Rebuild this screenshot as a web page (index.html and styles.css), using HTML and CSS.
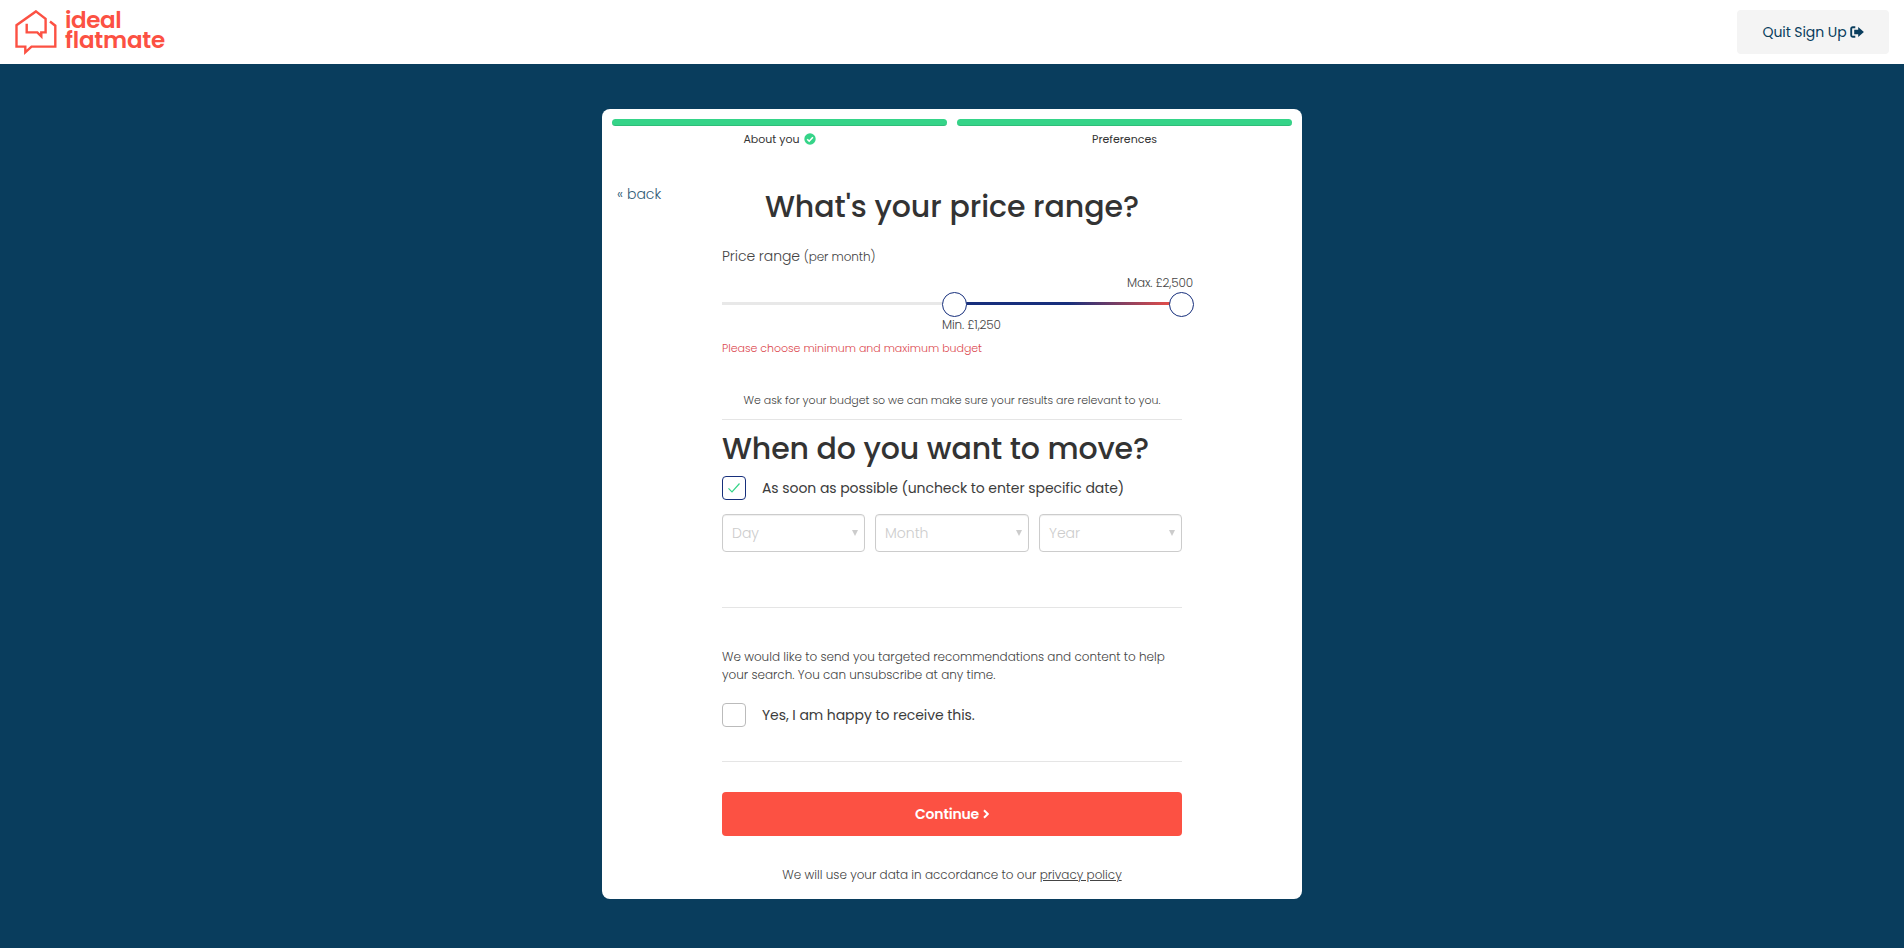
FILE: index.html
```html
<!DOCTYPE html>
<html lang="en">
<head>
<meta charset="utf-8">
<title>Ideal Flatmate - Sign Up</title>
<link rel="stylesheet" href="styles.css">
</head>
<body>
<header class="header">
  <a class="logo">
    <svg class="logo-mark" width="43" height="46" viewBox="0 0 43 46" fill="none" stroke="#fc5143" stroke-width="2.4"><path d="M36 11.500l5.300 4.200v20.900H17.500l-6.200 5.700v-5.700H2.500V15.200L21.900 1.400L31.600 8.800v13.600h-4.300v4l-4-4H12.700v-8.600"/></svg>
    <span class="logo-text"><span class="t-ideal">ideal</span><span class="t-flat">flatmate</span></span>
  </a>
  <a class="quit"><span class="t-quit">Quit Sign Up</span><svg width="14" height="12" viewBox="0 0 14 12"><path d="M5.300 1.200H2.700A1.500 1.500 0 0 0 1.200 2.700v6.600A1.500 1.500 0 0 0 2.700 10.800h2.600" fill="none" stroke="#093d5d" stroke-width="1.900"/><path d="M4.200 3.800v4.400h4v2.900L13.900 6 8.200.9v2.900z" fill="#093d5d"/></svg></a>
</header>
<main class="card">
  <div class="steps">
    <div class="step"><div class="bar"></div><div class="step-label"><span>About you</span><svg width="12" height="12" viewBox="0 0 12 12"><circle cx="6" cy="6" r="5.700" fill="#35d488"/><path d="M3.200 6.200l2 2 3.700-3.900" fill="none" stroke="#fff" stroke-width="1.600"/></svg></div></div>
    <div class="step"><div class="bar"></div><div class="step-label"><span>Preferences</span></div></div>
  </div>
  <div class="content">
    <a class="back">« back</a>
    <form class="form">
      <h1 class="title">What's your price range?</h1>
      <div class="price-label"><span class="t-price">Price range</span> <span class="t-per">(per month)</span></div>
      <div class="slider">
        <div class="track"><div class="fill"></div></div>
        <span class="handle handle-min"></span><span class="handle handle-max"></span>
        <span class="val val-max">Max. £2,500</span>
        <span class="val val-min">Min. £1,250</span>
      </div>
      <div class="error">Please choose minimum and maximum budget</div>
      <div class="hint">We ask for your budget so we can make sure your results are relevant to you.</div>
      <hr class="rule">
      <h2 class="subtitle">When do you want to move?</h2>
      <label class="check"><span class="box box-on"><svg width="14" height="12" viewBox="0 0 14 12"><path d="M1.500 6.300l3.500 3.500L12.500 1.500" fill="none" stroke="#35d488" stroke-width="1.200"/></svg></span><span>As soon as possible (uncheck to enter specific date)</span></label>
      <div class="selects">
        <div class="select"><span>Day</span><i class="arrow"></i></div>
        <div class="select"><span>Month</span><i class="arrow"></i></div>
        <div class="select"><span>Year</span><i class="arrow"></i></div>
      </div>
      <hr class="rule rule-2">
      <p class="promo">We would like to send you targeted recommendations and content to help<br>your search. You can unsubscribe at any time.</p>
      <label class="check check-2"><span class="box"></span><span>Yes, I am happy to receive this.</span></label>
      <hr class="rule rule-3">
      <a class="continue"><span class="t-cont">Continue</span><svg width="6" height="10" viewBox="0 0 6 10"><path d="M1 1.200L4.800 5 1 8.800" fill="none" stroke="#fff" stroke-width="2"/></svg></a>
      <div class="note">We will use your data in accordance to our <a class="policy">privacy policy</a></div>
    </form>
  </div>
</main>
</body>
</html>
```
FILE: styles.css
```css
* { box-sizing: border-box; }
body { margin: 0; min-height: 948px; background: #093d5d; color: #333; font-family: Poppins, Inter, sans-serif; font-size: 14px; font-weight: 300; }
.header { height: 64px; background: #fff; display: flex; justify-content: space-between; align-items: flex-start; padding: 10px 15px 0 14px; }
.logo { display: flex; gap: 8px; }
.logo-text { display: flex; flex-direction: column; font-size: 23px; line-height: 20px; font-weight: 600; color: #fc5143; }
.t-ideal { letter-spacing: -.4px; }
.t-flat { letter-spacing: -.2px; }
.quit { width: 152px; height: 44px; border-radius: 4px; background: #f4f4f4; color: #093d5d; display: flex; align-items: center; justify-content: center; gap: 3px; font-weight: 400; }
.t-quit { letter-spacing: -.08px; }
.card { width: 700px; height: 790px; margin: 45px auto 0; padding: 10px; background: #fff; border-radius: 8px; }
.steps { display: grid; grid-template-columns: 1fr 1fr; gap: 10px; }
.bar { height: 7px; border-radius: 4px; background: #35d488; border-bottom: 1px solid #2fbd79; }
.step-label { display: flex; justify-content: center; align-items: center; gap: 4px; margin-top: 5px; height: 16px; font-size: 11px; line-height: 16px; font-weight: 400; }
.content { display: grid; grid-template-columns: 110px 460px; margin-top: 37px; }
.back { padding-left: 5px; line-height: 20px; color: #2f5b76; }
.form { padding-top: 3px; white-space: nowrap; }
.title, .subtitle { margin: 0; font-size: 30px; line-height: 40px; font-weight: 500; }
.title { text-align: center; letter-spacing: -.07px; }
.subtitle { margin-top: 9px; letter-spacing: -.13px; }
.price-label { margin-top: 19px; height: 20px; line-height: 20px; color: #444; letter-spacing: -.08px; }
.t-per { font-size: 12px; letter-spacing: -.1px; }
.slider { position: relative; height: 74px; padding-top: 36px; }
.track { height: 3px; background: #e8e8e8; display: flex; justify-content: flex-end; }
.fill { width: 228px; background: linear-gradient(90deg, #172f7c 50%, #fc5143); }
.handle { position: absolute; top: 26px; width: 25px; height: 25px; border: 1px solid #172f7c; border-radius: 50%; background: #fff; }
.handle-min { left: 219.500px; }
.handle-max { left: 447px; }
.val { position: absolute; font-size: 12px; line-height: 16px; color: #444; letter-spacing: -.13px; }
.val-max { right: -11px; top: 9px; }
.val-min { left: 220px; top: 51px; }
.error { font-size: 11px; line-height: 16px; color: #dc4a50; letter-spacing: -.025px; }
.hint { margin-top: 36px; font-size: 11px; line-height: 16px; text-align: center; color: #444; letter-spacing: -.02px; }
.rule { margin: 11px 0 0; border: 0; height: 1px; background: #e5e5e5; }
.rule-2 { margin-top: 55px; }
.rule-3 { margin-top: 34px; }
.check { display: flex; gap: 16px; margin-top: 7px; line-height: 24px; font-weight: 400; color: #3c3c3c; letter-spacing: -.065px; }
.check-2 { margin-top: 19px; }
.box { width: 24px; height: 24px; border: 1px solid #bbb; border-radius: 4px; display: flex; align-items: center; justify-content: center; }
.box-on { border-color: #172f7c; }
.selects { display: grid; grid-template-columns: 143px 154px 143px; gap: 10px; margin-top: 14px; }
.select { height: 38px; padding: 0 6px 0 9px; border: 1px solid #ccc; border-radius: 4px; box-shadow: inset 0 1px 1px #0001; display: flex; align-items: center; justify-content: space-between; color: #ccc; }
.arrow { border: 3px solid transparent; border-top: 6px solid #ccc; border-bottom: 0; }
.promo { margin: 40px 0 0; font-size: 12px; line-height: 18px; color: #444; letter-spacing: -.016px; }
.continue { display: flex; justify-content: center; align-items: center; gap: 4px; height: 44px; margin-top: 30px; border-radius: 4px; background: #fc5143; color: #fff; font-weight: 600; }
.t-cont { letter-spacing: -.18px; }
.note { margin-top: 30px; font-size: 12px; line-height: 18px; text-align: center; color: #444; letter-spacing: -.015px; }
.policy { text-decoration: underline; }
```
